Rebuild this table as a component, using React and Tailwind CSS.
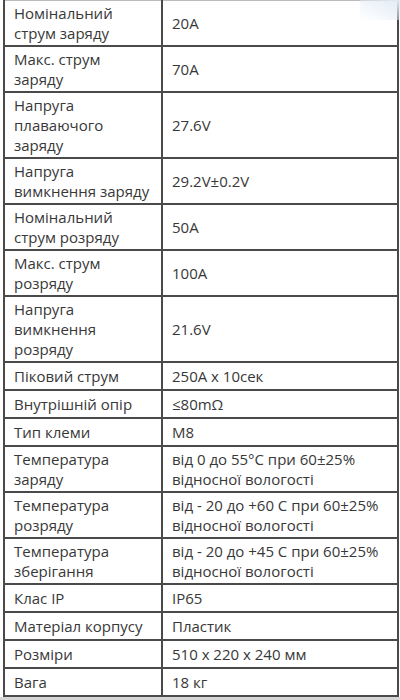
const rows = [
  { label: ["Номінальний", "струм заряду"], value: ["20A"] },
  { label: ["Макс. струм", "заряду"], value: ["70A"] },
  { label: ["Напруга", "плаваючого", "заряду"], value: ["27.6V"] },
  { label: ["Напруга", "вимкнення заряду"], value: ["29.2V±0.2V"] },
  { label: ["Номінальний", "струм розряду"], value: ["50A"] },
  { label: ["Макс. струм", "розряду"], value: ["100A"] },
  { label: ["Напруга", "вимкнення", "розряду"], value: ["21.6V"] },
  { label: ["Піковий струм"], value: ["250A x 10сек"] },
  { label: ["Внутрішній опір"], value: ["≤80mΩ"] },
  { label: ["Тип клеми"], value: ["M8"] },
  { label: ["Температура", "заряду"], value: ["від 0 до 55°C при 60±25%", "відносної вологості"] },
  { label: ["Температура", "розряду"], value: ["від - 20 до +60 C при 60±25%", "відносної вологості"] },
  { label: ["Температура", "зберігання"], value: ["від - 20 до +45 C при 60±25%", "відносної вологості"] },
  { label: ["Клас IP"], value: ["IP65"] },
  { label: ["Матеріал корпусу"], value: ["Пластик"] },
  { label: ["Розміри"], value: ["510 x 220 x 240 мм"] },
  { label: ["Вага"], value: ["18 кг"] },
];

function Lines({ lines }) {
  return lines.map((l, i) => (
    <span key={i} className="block whitespace-nowrap">
      {l}
    </span>
  ));
}

export default function App() {
  return (
    <div className="w-[400px] h-[700px] bg-white overflow-hidden relative">
      <table
        className="ml-[3px] w-[396px] border-collapse text-[15px] leading-[20px] text-[#383838] table-fixed"
        style={{ fontFamily: "'Open Sans', 'DejaVu Sans', sans-serif" }}
      >
        <colgroup>
          <col className="w-[158px]" />
          <col />
        </colgroup>
        <tbody>
          {rows.map((r, i) => (
            <tr key={i} className="h-[28px]">
              <td
                className={
                  "border-2 border-[#4a4a4a] px-[9px] py-[2px] align-middle " +
                  (i === 0 ? "border-t-[#bbbbbb] border-t" : "")
                }
              >
                <Lines lines={r.label} />
              </td>
              <td
                className={
                  "border-2 border-[#4a4a4a] px-[9px] py-[2px] align-middle " +
                  (i === 0 ? "border-t-[#bbbbbb] border-t" : "")
                }
              >
                <Lines lines={r.value} />
              </td>
            </tr>
          ))}
        </tbody>
      </table>
      <div className="absolute left-0 right-0 bottom-0 h-[3px] bg-[#d6d6d6]" />
      <div className="absolute right-0 top-0 w-[40px] h-[20px] bg-gradient-to-bl from-[#e3ebf5] to-transparent" />
    </div>
  );
}
